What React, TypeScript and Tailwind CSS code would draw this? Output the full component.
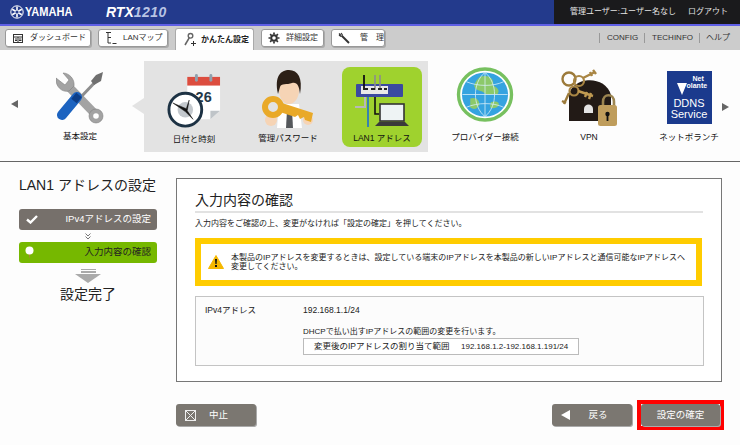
import type { ReactNode } from "react";

const FONT = "[font-family:'Liberation_Sans','Noto_Sans_CJK_JP',sans-serif]";

function YamahaMark() {
  return (
    <svg width="14" height="14" viewBox="0 0 14 14" fill="none" stroke="#fff">
      <circle cx="7" cy="7" r="6.2" strokeWidth="1" />
      <path d="M7 1.5V12.5M2.2 4.2L11.8 9.8M2.2 9.8L11.8 4.2" strokeWidth="1.6" />
      <circle cx="7" cy="7" r="1.6" fill="#233a8c" stroke="none" />
    </svg>
  );
}

function Tab({ icon, label, w, active, labelClass }: { icon: ReactNode; label: string; w: string; active?: boolean; labelClass?: string }) {
  if (active) {
    return (
      <div className={`${w} h-[22px] self-end flex items-center gap-[4px] pl-[6px] bg-white border-t border-x border-[#aaa] rounded-t-[3px] text-[8px] font-bold text-[#222] whitespace-nowrap`}>
        {icon}
        <span>{label}</span>
      </div>
    );
  }
  return (
    <div className={`${w} h-[18px] flex items-center gap-[6px] pl-[6px] bg-white border border-[#999] rounded-[3px] text-[8px] text-[#333] shadow-[1px_1px_0_#aaa]`}>
      {icon}
      <span className={`whitespace-nowrap ${labelClass ?? ""}`}>{label}</span>
    </div>
  );
}

function DashIcon() {
  return (
    <svg width="12" height="11" viewBox="0 0 12 11" fill="none" stroke="#333">
      <rect x="1.5" y="1.5" width="9" height="8" />
      <path d="M1.5 4H10.5M6 4V9.5M3 6H5M3 7.5H5M7 6H9.5M7 7.5H9.5" />
    </svg>
  );
}
function MapIcon() {
  return (
    <svg width="12" height="14" viewBox="0 0 12 14" fill="none" stroke="#333">
      <path d="M1 1.5H6M3 1.5V12H6M3 6.5H6M7.5 12.5H11.5" />
    </svg>
  );
}
function EasyIcon() {
  return (
    <svg width="15" height="15" viewBox="0 0 15 15" fill="none">
      <circle cx="8.5" cy="3.8" r="2.3" stroke="#666" strokeWidth="1.4" />
      <path d="M7.2 5.8L3 13" stroke="#666" strokeWidth="1.6" />
      <path d="M9 11.5H14M11.5 9V14" stroke="#333" />
    </svg>
  );
}
function GearIcon() {
  return (
    <svg width="12" height="12" viewBox="0 0 12 12" fill="none" stroke="#333">
      <circle cx="6" cy="6" r="2.8" strokeWidth="2" />
      <path d="M6 .5V2.5M6 9.5V11.5M.5 6H2.5M9.5 6H11.5M2.1 2.1L3.5 3.5M8.5 8.5L9.9 9.9M9.9 2.1L8.5 3.5M3.5 8.5L2.1 9.9" strokeWidth="1.7" />
    </svg>
  );
}
function SpannerIcon() {
  return (
    <svg width="12" height="12" viewBox="0 0 12 12" fill="none" stroke="#333">
      <path d="M3.5 3.5L11 11" strokeWidth="2" />
      <path d="M1 1.5L3 3.5M3 1L4.5 3M1 3L3 4.5" strokeWidth="1.2" />
    </svg>
  );
}

function ToolsArt() {
  return (
    <svg width="48" height="52" viewBox="0 0 48 52">
      <path d="M12 14L41 44" fill="none" stroke="#a3a3a3" strokeWidth="8.5" />
      <path d="M0 6C-1 14 6 21 13 19L18 14C19 7 13 1 7 1L13 8L9 13Z" fill="#a3a3a3" stroke="#808080" strokeWidth=".6" />
      <circle cx="40" cy="44" r="7" fill="#a3a3a3" stroke="#808080" strokeWidth=".6" />
      <circle cx="40" cy="44" r="2.8" fill="#fff" />
      <path d="M44 5L23 27" stroke="#8d8d8d" strokeWidth="3" />
      <path d="M47 0L45 9L38 13L35 9L40 3Z" fill="#6f6f6f" />
      <path d="M21 25L6 43" stroke="#1c63c0" strokeWidth="10" strokeLinecap="round" />
      <path d="M23 23L18 29" stroke="#0d3e88" strokeWidth="7" />
    </svg>
  );
}
function ClockArt() {
  return (
    <svg width="54" height="54" viewBox="0 0 56 56">
      <path d="M21 3H55V38L45 47H21Z" fill="#fff" />
      <path d="M55 38L45 47V38Z" fill="#bfc4c8" />
      <rect x="21" y="3" width="34" height="9" fill="#dc4d3f" />
      <rect x="29" y="0" width="3" height="8" rx="1.5" fill="#8fa0ad" />
      <rect x="44" y="0" width="3" height="8" rx="1.5" fill="#8fa0ad" />
      <text x="38" y="29" textAnchor="middle" fontSize="15" fontWeight="700" fill="#24384a" fontFamily="Liberation Sans">26</text>
      <circle cx="19" cy="37" r="17" fill="#fff" stroke="#1d3244" strokeWidth="3" />
      <circle cx="19" cy="37" r="8" fill="#c3c8cd" />
      <path d="M6 30L20 36L23 27L21 38L27 47L19 39Z" fill="#111" stroke="#111" strokeWidth=".5" />
    </svg>
  );
}
function PersonKeyArt() {
  return (
    <svg width="52" height="58" viewBox="0 0 52 58">
      <path d="M15 58L17 34H37L40 58Z" fill="#fff" />
      <path d="M25 40H30L31 58H24Z" fill="#55585c" />
      <ellipse cx="27" cy="20" rx="10" ry="14" fill="#f6d4b5" />
      <path d="M16 24C12 6 19 0 27 0C36 0 41 8 38 24C37 15 35 12 30 13C25 15 19 13 18 17Z" fill="#2c1f16" />
      <ellipse cx="9" cy="50" rx="6" ry="6" fill="#f6d4b5" />
      <ellipse cx="46" cy="50" rx="5" ry="5" fill="#f6d4b5" />
      <path d="M20 33L51 43L49 52L43 50L42 47L38 49L36 45L33 47L18 42Z" fill="#e9a928" />
      <circle cx="11" cy="37" r="8" fill="none" stroke="#e9a928" strokeWidth="6" />
    </svg>
  );
}
function LanArt() {
  return (
    <svg width="56" height="54" viewBox="0 0 56 54">
      <path d="M1 33H11V20" fill="none" stroke="#b8b8b8" strokeWidth="2" />
      <path d="M14 53V16" stroke="#1f6fd0" strokeWidth="1.6" />
      <path d="M21 18V40H25" fill="none" stroke="#111" strokeWidth="1.6" />
      <rect x="2" y="10" width="47" height="13" rx="1" fill="#3b4aa0" />
      <rect x="7" y="12" width="27" height="8" fill="#e9e9e9" />
      <path d="M10 1V16" stroke="#111" strokeWidth="1.8" />
      <path d="M21 1V16M26 1V16" stroke="#8d8d8d" strokeWidth="1.6" />
      <path d="M10 15H14M17 15H21M24 15H28M30 15H33" stroke="#222" strokeWidth="2" />
      <rect x="26" y="30" width="24" height="17" fill="#eef3f4" stroke="#333" strokeWidth="1.6" />
      <path d="M25 48H51L55 52H21Z" fill="#3a3a3a" />
    </svg>
  );
}
function GlobeArt() {
  return (
    <svg width="58" height="55" viewBox="0 0 58 56" fill="none">
      <ellipse cx="29" cy="28" rx="27" ry="26" stroke="#77c05f" strokeWidth="3.4" fill="#fff" />
      <ellipse cx="29" cy="28" rx="23.5" ry="22.5" fill="#35a3e0" />
      <path d="M24 10C33 7 39 12 37 19C42 20 45 25 41 28C37 26 33 30 29 27C26 23 19 25 18 19C19 15 21 13 24 10Z" fill="#8cc96a" />
      <path d="M14 32C20 30 24 34 23 39C21 43 17 44 14 41Z" fill="#8cc96a" />
      <path d="M35 36C39 34 44 35 43 39C41 42 37 43 34 41Z" fill="#8cc96a" />
      <path d="M6 28H52M10 15C22 20 37 20 48 15M10 41C22 36 37 36 48 41M29 5.5V50.5M29 5.5C16 16 16 40 29 50.5M29 5.5C42 16 42 40 29 50.5" stroke="#d8eef8" strokeWidth=".8" />
    </svg>
  );
}
function VpnArt() {
  return (
    <svg width="56" height="58" viewBox="0 0 56 58" fill="none">
      <path d="M8 52V28C8 8 44 4 50 26V52Z" fill="#221a16" />
      <path d="M23 44V40C23 34 32 34 32 40V44Z" fill="#e4e4e4" />
      <circle cx="8" cy="10" r="6.5" stroke="#9c7a3a" strokeWidth="2.4" />
      <circle cx="18" cy="12" r="5" stroke="#a98644" strokeWidth="2.2" />
      <circle cx="13" cy="22" r="4.5" stroke="#a98644" strokeWidth="2.2" />
      <path d="M22 9L34 3M32 1L35 5M29 3L31 7" stroke="#a98644" strokeWidth="2.4" />
      <path d="M17 22L32 27M30 24L28 30M26 23L24 28" stroke="#c09a52" strokeWidth="2.4" />
      <path d="M8 24L3 35M1 32L5 34" stroke="#9c7a3a" strokeWidth="2.4" />
      <path d="M42 38V33C42 24 53 24 53 33V38" stroke="#9c8550" strokeWidth="2.6" />
      <rect x="37" y="36" width="19" height="21" rx="2.5" fill="#bf9d5c" />
      <circle cx="46.5" cy="45" r="2.2" fill="#111" />
      <path d="M46.5 45V52" stroke="#111" strokeWidth="1.8" />
    </svg>
  );
}
function NetVolanteArt() {
  return (
    <div className="w-[45px] h-[53px] bg-[#1b3a8d] text-white flex flex-col items-center leading-none [font-family:'Liberation_Sans',sans-serif]">
      <div className="w-full h-[26px] pt-[4px] pl-[10px] flex">
        <div className="w-0 h-0 mt-[8px] border-x-[5px] border-t-[12px] border-x-transparent border-t-white" />
        <div className="text-[7px] font-bold leading-[7px]">
          <div className="pl-[6px]">Net</div>
          <div className="whitespace-nowrap">olante</div>
        </div>
      </div>
      <div className="text-[11px] leading-[11px] mt-[1px]">DDNS</div>
      <div className="text-[11px] leading-[11px] whitespace-nowrap">Service</div>
    </div>
  );
}

function Item({ art, label, w, labelGap, lift }: { art: ReactNode; label: string; w: string; labelGap?: string; lift?: string }) {
  return (
    <div className={`${w} flex flex-col items-center shrink-0`}>
      <div className={`h-[60px] flex items-end justify-center ${lift ?? ""}`}>{art}</div>
      <div className={`${labelGap ?? "mt-[5px]"} text-[8.5px] leading-[12px] whitespace-nowrap text-[#111]`}>{label}</div>
    </div>
  );
}

function Field({ w, icon, label, extra }: { w: string; icon?: ReactNode; label: string; extra?: string }) {
  return (
    <div className={`${w} h-[22px] flex items-center bg-[#7b7771] text-white text-[9.5px] rounded-[3px] shadow-[1px_1px_0_#aaa] ${extra ?? ""}`}>
      {icon}
      <span className="flex-1 text-center">{label}</span>
    </div>
  );
}

export default function App() {
  return (
    <div className={`w-[740px] h-[445px] bg-[#fdfdfd] overflow-hidden ${FONT}`}>
      <div className="h-[24px] flex bg-[#233a8c]">
        <div className="flex-1 flex items-center pl-[10px]">
          <YamahaMark />
          <span className="ml-[1px] w-[81px] text-[13px] font-bold text-white [transform:scaleX(.85)] origin-left">YAMAHA</span>
          <span className="text-[14px] font-bold italic text-white">RTX</span>
          <span className="text-[14px] font-bold italic text-[#b8c4e4] tracking-[.5px]">1210</span>
        </div>
        <div className="w-[186px] bg-[#1a1a1c] flex items-center gap-[12px] pl-[16px] text-[8px] text-[#e4e4e4] whitespace-nowrap">
          <span>管理ユーザー:ユーザー名なし</span>
          <span>ログアウト</span>
        </div>
      </div>
      <div className="h-[2px] bg-[#5f5fe6]" />
      <div className="h-[24px] bg-[#cccccc] flex items-center gap-[7px] pl-[5px] pr-[10px]">
        <Tab w="w-[86px]" icon={<DashIcon />} label="ダッシュボード" />
        <Tab w="w-[70px]" icon={<MapIcon />} label="LANマップ" />
        <Tab w="w-[79px]" icon={<EasyIcon />} label="かんたん設定" active />
        <Tab w="w-[63px]" icon={<GearIcon />} label="詳細設定" />
        <Tab w="w-[54px]" icon={<SpannerIcon />} label="管　理" labelClass="ml-[4px]" />
        <div className="ml-auto flex items-center text-[8px] text-[#333]">
          <span className="pl-[7px] pr-[6px] border-l border-[#999] leading-[10px]">CONFIG</span>
          <span className="pl-[7px] pr-[6px] border-l border-[#999] leading-[10px]">TECHINFO</span>
          <span className="pl-[6px] border-l border-[#999] leading-[10px]">ヘルプ</span>
        </div>
      </div>

      <div className="h-[112px] flex pt-[11px] border-b border-[#666]">
        <div className="w-[144px] flex items-start pt-[3px] shrink-0">
          <div className="w-0 h-0 mt-[36px] ml-[11px] border-y-[4px] border-r-[7px] border-y-transparent border-r-[#666]" />
          <Item w="w-[124px]" art={<ToolsArt />} label="基本設定" labelGap="mt-[6px]" />
        </div>
        <div className="relative w-[284px] h-[91px] bg-[#e3e3e3] flex items-start shrink-0">
          <div className="absolute left-[-12px] top-[37px] w-0 h-0 border-y-[8px] border-r-[12px] border-y-transparent border-r-[#e3e3e3]" />
          <div className="pt-[7px] flex items-start">
            <Item w="w-[100px]" art={<ClockArt />} label="日付と時刻" labelGap="mt-[5px]" />
            <Item w="w-[88px]" art={<PersonKeyArt />} label="管理パスワード" labelGap="mt-[4px]" />
          </div>
          <div className="ml-[10px] mt-[6px] w-[80px] h-[80px] rounded-[8px] bg-[#9fd22e] pt-[1px]">
            <Item w="w-[80px]" art={<LanArt />} label="LAN1 アドレス" labelGap="mt-[4px]" />
          </div>
        </div>
        <div className="flex items-start pt-[6px]">
          <Item w="w-[114px]" art={<GlobeArt />} label="プロバイダー接続" labelGap="mt-[4px]" lift="pb-[5px]" />
          <Item w="w-[94px]" art={<VpnArt />} label="VPN" labelGap="mt-[4px]" />
          <div className="ml-[10px]">
            <Item w="w-[86px]" art={<NetVolanteArt />} label="ネットボランチ" labelGap="mt-[4px]" lift="pb-[3px]" />
          </div>
          <div className="w-0 h-0 mt-[36px] ml-[-10px] border-y-[4px] border-l-[7px] border-y-transparent border-l-[#666]" />
        </div>
      </div>

      <div className="flex h-[283px] pt-[16px]">
        <div className="w-[176px] pl-[19px] pr-[19px] shrink-0">
          <div className="text-[14px] leading-[18px] text-[#222] whitespace-nowrap mt-[-2px]">LAN1 アドレスの設定</div>
          <div className="mt-[15px] h-[21px] flex items-center justify-between pl-[7px] pr-[6px] rounded-[3px] bg-[#76706b] text-white text-[9.5px]">
            <svg width="12" height="9" viewBox="0 0 12 9" fill="none" stroke="#fff" strokeWidth="2.4">
              <path d="M1 4.5L4.5 7.5L11 1" />
            </svg>
            <span>IPv4アドレスの設定</span>
          </div>
          <div className="h-[12px] flex items-center justify-center">
            <svg width="6" height="7" viewBox="0 0 6 7" fill="none" stroke="#777">
              <path d="M.5 .5L3 3L5.5 .5M.5 3.5L3 6L5.5 3.5" />
            </svg>
          </div>
          <div className="h-[21px] flex items-center justify-between pl-[6px] pr-[6px] rounded-[3px] bg-[#76b800] text-[#222] text-[9.5px]">
            <svg width="9" height="13" viewBox="0 0 9 13">
              <path d="M3.6 8L4.5 13L5.4 8Z" fill="#a8883a" />
              <circle cx="4.5" cy="4.5" r="4" fill="#fff" />
            </svg>
            <span>入力内容の確認</span>
          </div>
          <div className="mt-[6px] flex flex-col items-center gap-[1px]">
            <div className="w-[15px] h-[1px] bg-[#aaa]" />
            <div className="w-[15px] h-[2px] bg-[#aaa]" />
            <div className="w-0 h-0 border-x-[13px] border-t-[9px] border-x-transparent border-t-[#aaa]" />
          </div>
          <div className="mt-[1px] text-center text-[14px] leading-[20px] text-[#222]">設定完了</div>
        </div>

        <div className="w-[564px]">
          <div className="w-[546px] h-[204px] border border-[#777] bg-white pt-[11px] px-[18px]">
            <div className="h-[23px] border-b-2 border-[#e2e2e2] text-[14px] leading-[20px] text-[#222]">入力内容の確認</div>
            <div className="mt-[5px] text-[8px] leading-[12px] text-[#222]">入力内容をご確認の上、変更がなければ「設定の確定」を押してください。</div>
            <div className="mt-[8px] w-[507px] h-[48px] border-[6px] border-[#ffcc00] flex items-center">
              <svg className="ml-[7px] shrink-0" width="16" height="14" viewBox="0 0 16 14">
                <path d="M8 .5L15.5 13.5H.5Z" fill="#f5b800" stroke="#f5b800" strokeLinejoin="round" />
                <path d="M7 4H9L8.6 9H7.4ZM7 10H9V12H7Z" fill="#111" />
              </svg>
              <div className="ml-[7px] text-[8px] leading-[9px] text-[#222]">
                本製品のIPアドレスを変更するときは、設定している端末のIPアドレスを本製品の新しいIPアドレスと通信可能なIPアドレスへ<br />変更してください。
              </div>
            </div>
            <div className="mt-[10px] w-[509px] h-[70px] border border-[#c4c4c4] bg-[#fcfcfc] flex pt-[7px] pl-[9px] text-[8px] text-[#222]">
              <div className="w-[98px] text-[8.5px] leading-[12px]">IPv4アドレス</div>
              <div>
                <div className="leading-[12px] text-[8.5px]">192.168.1.1/24</div>
                <div className="mt-[10px] leading-[12px]">DHCPで払い出すIPアドレスの範囲の変更を行います。</div>
                <div className="w-[276px] h-[17px] border border-[#bbb] bg-white flex items-center pl-[10px]">
                  <span className="w-[147px] text-[8.5px]">変更後のIPアドレスの割り当て範囲</span>
                  <span>192.168.1.2-192.168.1.191/24</span>
                </div>
              </div>
            </div>
          </div>
          <div className="mt-[18px] w-[550px] flex items-center">
            <Field
              w="w-[80px]"
              label="中止"
              icon={
                <svg className="ml-[9px]" width="11" height="11" viewBox="0 0 11 11" fill="none" stroke="#eee">
                  <rect x=".5" y=".5" width="10" height="10" />
                  <path d="M.5 .5L10.5 10.5M10.5 .5L.5 10.5" />
                </svg>
              }
              extra="pr-[15px]"
            />
            <Field
              w="w-[80px]"
              label="戻る"
              icon={<div className="ml-[9px] w-0 h-0 border-y-[5px] border-r-[9px] border-y-transparent border-r-white" />}
              extra="ml-[296px] pr-[6px]"
            />
            <div className="ml-[5px] border-[4px] border-[#ff0000]">
              <Field w="w-[79px]" label="設定の確定" />
            </div>
          </div>
        </div>
      </div>
    </div>
  );
}
